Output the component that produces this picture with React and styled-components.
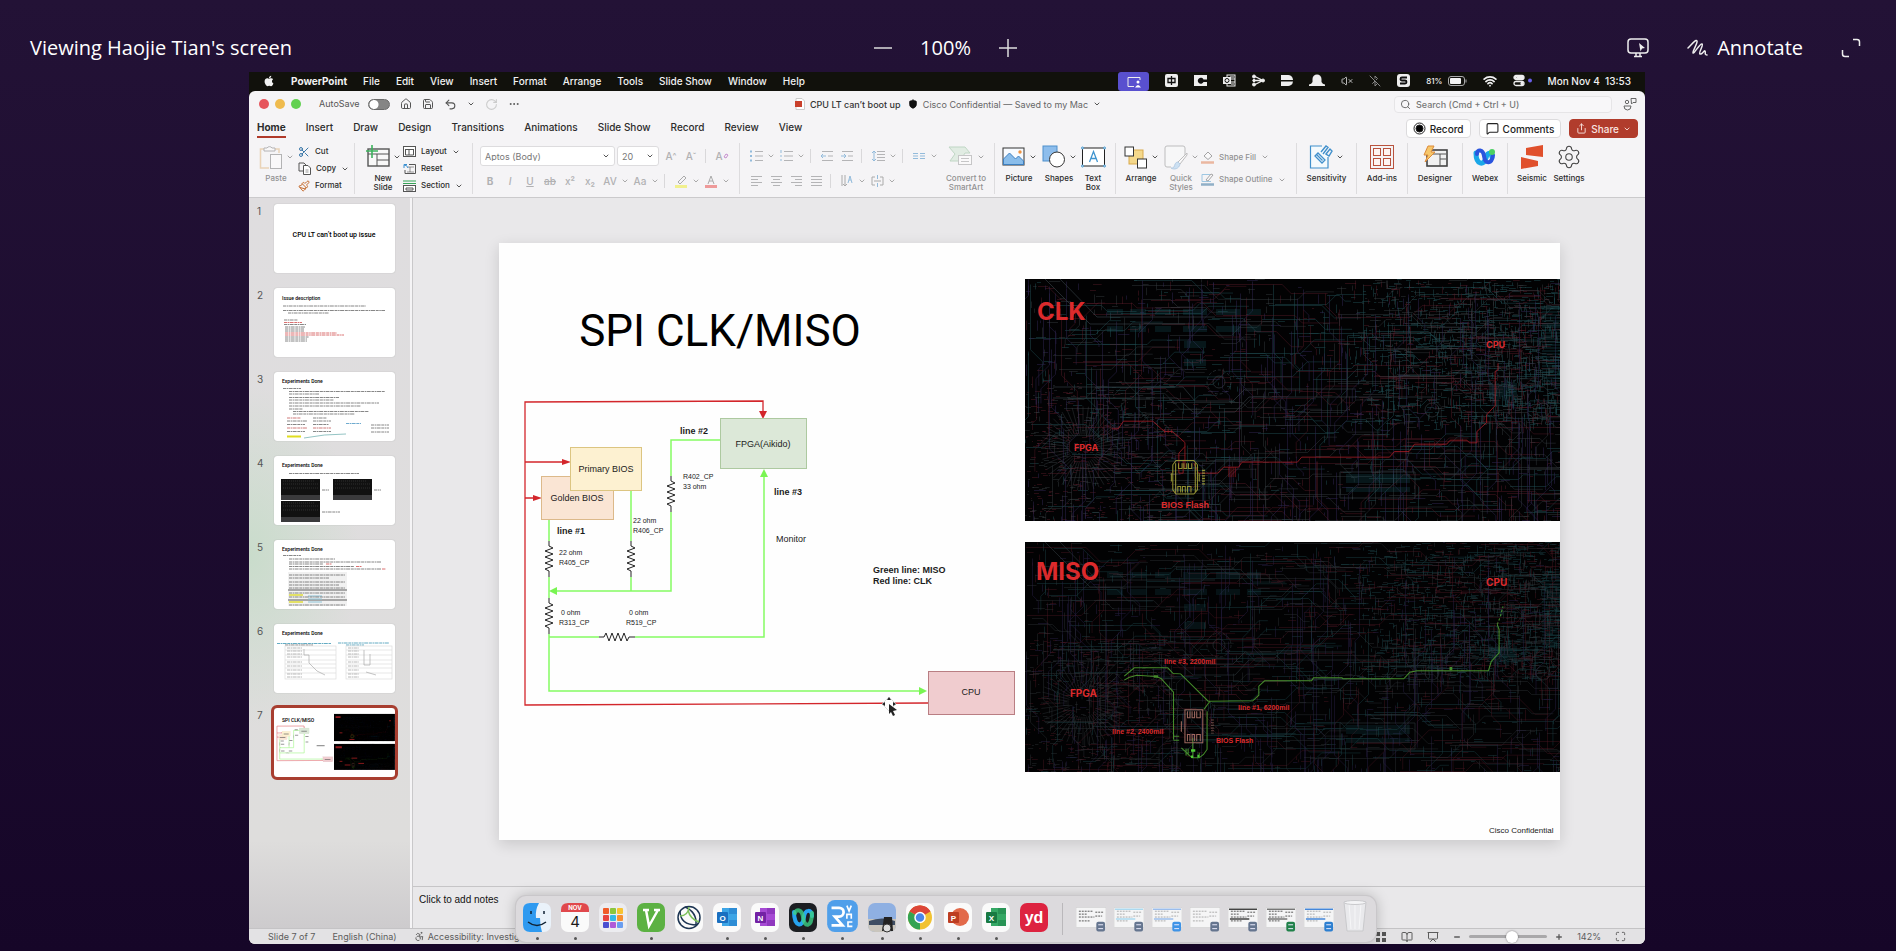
import React from "react";
import styled, { createGlobalStyle } from "styled-components";
import { Home, Save, Undo2, RotateCw, Ellipsis, Search, ChevronDown, Settings, MessageSquare, Share, Wifi, VolumeX, BluetoothOff, Plus, Minus, Scissors, Copy, Paintbrush, Accessibility, BookOpen, Presentation, Maximize, Shield } from "lucide-react";
import { FaApple } from "react-icons/fa";

const Global = createGlobalStyle`
  *, *::before, *::after { box-sizing: border-box; }
  body { margin: 0; background: #160628; }
  button, input, select { font: inherit; color: inherit; }
  button { background: none; border: 0; padding: 0; margin: 0; }
`;

/* ---------- meeting viewer ---------- */

const Viewer = styled.div`
  min-height: 100vh;
  display: flex;
  flex-direction: column;
  background: linear-gradient(#231236, #160628);
  color: #fff;
  font-family: "Open Sans", "Noto Sans", sans-serif;
`;

const ViewerBar = styled.header`
  height: 72px;
  padding: 23px 35px 0 30px;
  display: grid;
  grid-template-columns: 1fr auto 1fr;
  align-items: center;
  font-size: 20px;
  line-height: 26px;
  white-space: nowrap;
`;

const ZoomControls = styled.div`
  display: flex;
  align-items: center;
  gap: 28px;
`;

const ViewerTools = styled.div`
  display: flex;
  align-items: center;
  justify-content: flex-end;
  gap: 38px;
`;

const ViewerButton = styled.button`
  display: flex;
  align-items: center;
  gap: 9px;
  font-size: 20px;
  svg { display: block; }
`;

const Stage = styled.main`
  flex: 1;
  display: flex;
  flex-direction: column;
  margin: 0 251px 7px 249px;
  position: relative;
  background: #11110c;
  border-radius: 0 0 6px 6px;
  font-family: Inter, "Noto Sans", sans-serif;
  font-size: 9px;
  color: #2c2c2c;
  white-space: nowrap;
`;

/* ---------- mac menu bar ---------- */

const MacBar = styled.nav`
  height: 19px;
  padding: 0 14px 0 14px;
  display: flex;
  align-items: flex-start;
  justify-content: space-between;
  color: #f2f2f2;
  font-size: 10px;
  font-weight: 500;
`;

const MacMenus = styled.div`
  height: 17px;
  display: flex;
  align-items: center;
  gap: 16px;
  b { font-weight: 700; }
`;

const MacStatus = styled.div`
  height: 17px;
  display: flex;
  align-items: center;
  gap: 16px;
  svg { display: block; }
`;

const SharingBadge = styled.span`
  width: 31px;
  height: 19px;
  align-self: flex-start;
  border-radius: 3px;
  background: #5950cf;
  display: grid;
  place-items: center;
`;

const Battery = styled.span`
  display: flex;
  align-items: center;
  gap: 5px;
  font-size: 8px;
`;

/* ---------- PowerPoint window ---------- */

const Window = styled.section`
  flex: 1;
  min-height: 0;
  display: flex;
  flex-direction: column;
  background: #f5f4f6;
  border-radius: 6px;
  overflow: hidden;
`;

const TitleBar = styled.div`
  height: 26px;
  padding: 0 8px 0 10px;
  display: grid;
  grid-template-columns: 1fr auto 1fr;
  align-items: center;
`;

const QuickAccess = styled.div`
  display: flex;
  align-items: center;
  gap: 10px;
  font-size: 9px;
  color: #555;
  svg { display: block; }
`;

const Light = styled.button`
  width: 10px;
  height: 10px;
  border-radius: 50%;
  background: ${(p) => p.$color};
  margin-right: ${(p) => (p.$last ? 8 : -4)}px;
`;

const Switch = styled.input`
  appearance: none;
  margin: 0 0 0 8px;
  width: 22px;
  height: 11px;
  border-radius: 6px;
  border: 1px solid #6b6b6b;
  vertical-align: middle;
  background: radial-gradient(circle at 5px 50%, #fff 4px, #858585 5px);
`;

const DocTitle = styled.h1`
  margin: 0;
  display: flex;
  align-items: center;
  gap: 5px;
  font-size: 9px;
  font-weight: 500;
  color: #333;
  span { color: #666; font-weight: 400; }
  svg { display: block; }
`;

const TitleRight = styled.div`
  display: flex;
  align-items: center;
  justify-content: flex-end;
  gap: 11px;
  color: #666;
`;

const SearchBox = styled.label`
  width: 218px;
  height: 17px;
  padding: 0 5px;
  display: flex;
  align-items: center;
  gap: 5px;
  border: 1px solid #e6e5e7;
  border-radius: 4px;
  background: #f8f7f9;
  input {
    flex: 1;
    min-width: 0;
    border: 0;
    padding: 0;
    background: none;
    font-size: 9px;
    font-weight: 500;
    outline: 0;
  }
  input::placeholder { color: #777; opacity: 1; }
`;

const TabRow = styled.div`
  height: 22px;
  padding: 0 7px 0 8px;
  display: flex;
  justify-content: space-between;
  font-size: 10px;
`;

const Tabs = styled.div`
  display: flex;
  gap: 20px;
`;

const Tab = styled.button`
  height: 21px;
  padding-top: 2px;
  line-height: 17px;
  font-weight: ${(p) => (p.$active ? 700 : 500)};
  border-bottom: 2px solid ${(p) => (p.$active ? "#b03a2a" : "transparent")};
`;

const TabActions = styled.div`
  display: flex;
  gap: 8px;
  padding-top: 2px;
`;

const Pill = styled.button`
  height: 19px;
  padding: 0 6px;
  display: flex;
  align-items: center;
  gap: 4px;
  border-radius: 4px;
  border: 1px solid ${(p) => (p.$primary ? "#b13c2c" : "#dcdbdd")};
  background: ${(p) => (p.$primary ? "#b13c2c" : "#fff")};
  color: ${(p) => (p.$primary ? "#f8e4e0" : "#222")};
  font-weight: 500;
`;

const Ribbon = styled.div`
  height: 59px;
  padding-bottom: 3px;
  display: flex;
  border-bottom: 1px solid #cbcacc;
  font-size: 8px;
  font-weight: 500;
  line-height: 9px;
`;

const Group = styled.div`
  flex: 0 0 ${(p) => p.$w}px;
  margin-top: 4px;
  padding-left: ${(p) => p.$pad || 0}px;
  display: flex;
  gap: ${(p) => p.$gap || 0}px;
  justify-content: ${(p) => (p.$center ? "center" : "flex-start")};
  border-right: ${(p) => (p.$last ? 0 : 1)}px solid #dddcde;
`;

const BigButton = styled.button`
  width: ${(p) => p.$w}px;
  display: flex;
  flex-direction: column;
  align-items: center;
  opacity: ${(p) => (p.$dim ? 0.5 : 1)};
`;

const BigIcon = styled.span`
  height: 28px;
  margin-bottom: 3px;
  display: flex;
  align-items: center;
  gap: 3px;
  svg { display: block; }
`;

const Stack = styled.span`
  display: flex;
  flex-direction: column;
  justify-content: ${(p) => (p.$spread ? "space-evenly" : "space-between")};
  opacity: ${(p) => (p.$dim ? 0.5 : 1)};
`;

const RowButton = styled.button`
  height: 17px;
  display: flex;
  align-items: center;
  gap: 5px;
  svg { display: block; }
`;

const Tools = styled.div`
  display: flex;
  flex-direction: column;
  flex: 0 0 ${(p) => p.$w}px;
  gap: 5px;
  padding-top: 3px;
`;

const ToolRow = styled.div`
  height: 20px;
  display: flex;
  align-items: center;
  color: #b1b1b3;
  font-size: 10px;
`;

const Tool = styled.button`
  width: ${(p) => p.$w || 20}px;
  display: flex;
  justify-content: center;
  align-items: center;
  line-height: 12px;
  svg { display: block; }
`;

const Rule = styled.span`
  width: 1px;
  height: 14px;
  margin: 0 6px 0 4px;
  background: #d9d8da;
`;

const Field = styled.label`
  width: ${(p) => p.$w}px;
  height: 20px;
  margin-right: 2px;
  padding: 0 4px;
  display: flex;
  align-items: center;
  background: #fff;
  border: 1px solid #dddcde;
  border-radius: 3px;
  color: #555;
  select {
    flex: 1;
    min-width: 0;
    appearance: none;
    border: 0;
    padding: 0;
    background: none;
    font-size: 9px;
    font-weight: 400;
    color: #777;
  }
`;

const Body = styled.div`
  flex: 1;
  min-height: 0;
  display: flex;
`;

const Sidebar = styled.aside`
  flex: none;
  width: 161px;
  padding: 6px 15px 0 8px;
  display: flex;
  flex-direction: column;
  gap: 15px;
  background:
    radial-gradient(ellipse 110px 170px at 0 49%, #c9dccb, rgba(222, 222, 221, 0)),
    linear-gradient(#dfdddf, #dedddc 88%, #cdcbcd);
`;

const ThumbRow = styled.button`
  display: flex;
  align-items: flex-start;
  justify-content: space-between;
  text-align: left;
  font-size: 10px;
  line-height: 14px;
  color: #555;
`;

const Thumb = styled.span`
  width: 121px;
  height: 69px;
  border-radius: 3px;
  background: #fff;
  overflow: hidden;
  box-shadow: 0 0 1px #999;
  outline: ${(p) => (p.$active ? "3px solid #a83e30" : "0")};
  svg { display: block; }
`;

const Main = styled.div`
  flex: 1;
  min-width: 0;
  margin-left: 2px;
  border-left: 1px solid #c9c8ca;
  display: flex;
  flex-direction: column;
  background: #e9e8ea;
`;

const Canvas = styled.div`
  flex: 1;
  display: grid;
  align-items: center;
  padding: 0 85px 1px 86px;
`;

const Slide = styled.article`
  background: #fefefe;
  box-shadow: 0 4px 14px rgba(0, 0, 0, 0.14);
  > svg { display: block; width: 100%; height: auto; }
`;

const Notes = styled.div`
  height: 42px;
  padding: 6px 6px;
  border-top: 1px solid #c6c5c7;
  font-family: "Liberation Sans", Arial, sans-serif;
  font-size: 10px;
  line-height: 14px;
  color: #111;
`;

const StatusBar = styled.footer`
  height: 16px;
  padding: 0 19px;
  display: flex;
  align-items: center;
  justify-content: space-between;
  border-top: 1px solid #c4c3c5;
  background: #e3e2e4;
  color: #5c5c5c;
`;

const StatusGroup = styled.div`
  display: flex;
  align-items: center;
  gap: ${(p) => p.$gap}px;
  svg { display: block; }
`;

const Check = styled.span`
  display: flex;
  align-items: center;
  gap: 3px;
`;

const ZoomSlider = styled.input`
  appearance: none;
  width: 78px;
  height: 3px;
  margin: 0 -6px;
  border-radius: 2px;
  background: #a9a8aa;
  &::-webkit-slider-thumb {
    appearance: none;
    width: 12px;
    height: 12px;
    border-radius: 50%;
    background: #fff;
    box-shadow: 0 0 2px rgba(0, 0, 0, 0.5);
  }
`;

const Dock = styled.nav`
  position: absolute;
  left: 267px;
  bottom: 2px;
  height: 46px;
  padding: 0 8px 0 6px;
  display: flex;
  align-items: center;
  gap: 8px;
  border-radius: 10px;
  background: #dcdadd;
  box-shadow: 0 0 0 1px #c9c7ca, 0 0 14px rgba(0, 0, 0, 0.25);
`;

const DockApp = styled.button`
  height: 41px;
  display: flex;
  flex-direction: column;
  align-items: center;
  justify-content: flex-end;
  gap: 4px;
  &::after {
    content: "";
    width: 3px;
    height: 3px;
    border-radius: 50%;
    background: ${(p) => (p.$running ? "#555" : "transparent")};
  }
  svg { display: block; }
`;

const DockRule = styled.span`
  width: 1px;
  height: 32px;
  margin: 0 5px;
  background: #bab8bb;
`;

/* ---------- small drawings ---------- */

const Caret = ({ c = "#555", s = 8 }) => <ChevronDown size={s} color={c} strokeWidth={3} />;

const I = ({ w = 14, h = 12, children, ...p }) => (
  <svg width={w} height={h} viewBox={`0 0 ${w} ${h}`} fill="none" stroke="#555" {...p}>{children}</svg>
);

const statusIcons = {
  input: <I w={13} h={13} stroke="none"><rect width="13" height="13" rx="2" fill="#eee" /><path d="M3 4.500h7v4h-7z M6.500 2v9" fill="none" stroke="#111" strokeWidth="1.300" /></I>,
  c: <I w={13} h={13} stroke="none"><rect y="1" width="13" height="11" fill="#eee" /><path d="M13 5.500H9.500A3 3 0 1 0 9.500 8H13Z" fill="#111" /></I>,
  outlook: <I w={13} h={13} stroke="#eee"><rect x="4" y="1" width="8" height="11" /><path d="M7 3h4M8 5h4M8 8h4M8 10h3" /><rect y="3" width="8" height="7" fill="#eee" stroke="none" /><circle cx="4" cy="6.500" r="2" stroke="#111" /></I>,
  share: <I w={13} h={13} stroke="#eee" fill="#eee"><path d="M2 2 11 6.500 2 11M2 6.500h9" fill="none" strokeWidth="1.300" /><circle cx="2" cy="2.500" r="1.500" /><circle cx="2" cy="6.500" r="1.200" /><circle cx="2" cy="10.500" r="1.500" /><circle cx="11" cy="6.500" r="1.500" /></I>,
  d: <I w={12} h={13} stroke="none"><path d="M0 1h6a5 5 0 0 1 6 5H0ZM0 7.500h12a5 5 0 0 1-6 4.500H0Z" fill="#eee" /></I>,
  bell: <I w={16} h={13} stroke="none"><path d="M3.500 8V5a4.500 4.500 0 0 1 9 0v3q1 2 3.500 2.500v1.500H0v-1.500Q2.500 10 3.500 8Z" fill="#eee" /></I>,
  s: <I w={13} h={13} stroke="none"><rect width="13" height="13" rx="3" fill="#eee" /><path d="M10 3.500H5a1.500 1.500 0 0 0 0 3h3a1.500 1.500 0 0 1 0 3H3" fill="none" stroke="#111" strokeWidth="1.800" /></I>,
  toggles: <I w={19} h={13} stroke="#eee" strokeWidth="1.300"><rect x="1" y="1.500" width="10" height="4" rx="2" fill="#eee" /><circle cx="3.500" cy="3.500" r="1" fill="#111" /><rect x="1" y="7.500" width="10" height="4" rx="2" /><circle cx="9" cy="9.500" r="1" fill="#eee" /><circle cx="17" cy="6.500" r="2" fill="#6a60ea" stroke="none" /></I>,
};

const pic = {
  paste: <I w={24} h={25} opacity=".8"><path d="M5 4H1.500v19H10M16 4h4v4" stroke="#dba45c" strokeWidth="1.500" /><path d="M5 5V3h3a3 3 0 0 1 5 0h3v3H5Z" fill="#fff" /><rect x="11.500" y="9.500" width="11" height="14" fill="#fff" /></I>,
  newSlide: <I w={24} h={25}><rect x="2" y="4" width="21" height="17" fill="#f8f8f8" strokeWidth="1.400" /><path d="M2 9h21M11 9v12M11 15h12" /><path d="M6 0v13M0 6h12" stroke="#3bb25c" strokeWidth="1.600" /></I>,
  copy: <I w={13} h={13}><path d="M5 9H1V1h5l2 2v1" /><path d="M5.500 3.500H10l2.500 2.500v6.500h-7Z" fill="#fff" /><path d="M7.500 8h3M7.500 10h3" opacity=".6" /></I>,
  layout: <I w={13} h={11}><rect x=".5" y=".5" width="12" height="10" fill="#fff" /><path d="M2 3.500h9M2.500 3v6h8V3M6 3v6" /></I>,
  reset: <I w={13} h={11}><path d="M6 1.500h6.500v9H2V7" /><path d="M5 4h6M7 4v5M4 9h7" opacity=".6" /><path d="M5 5a4 4 0 0 0-4-3M1 5V1.500h3" stroke="#3a8fd0" /></I>,
  section: <I w={13} h={12}><path d="M0 1h13M0 3.500h13" stroke="#35a457" /><rect x=".5" y="5.500" width="12" height="6" fill="#fff" /><path d="M3 8h7v2H3z" /></I>,
  smart: <I w={26} h={22} stroke="#8cba95"><path d="M1 1h16l5 6h-5l-5 8H2l5-7Z" fill="#cfe6d2" /><rect x="10.500" y="9.500" width="13" height="9" fill="#fff" stroke="#999" /><path d="M13 12.500h8M13 15.500h8" stroke="#999" /></I>,
  picture: <I w={24} h={20}><rect x="1" y="1" width="21" height="17" fill="#f8fbff" stroke="#333" /><path d="M1.500 17V12l6-6 6 6 3-3 5 5v3.500h-20Z" fill="#8abdea" stroke="#3c7fc0" /><circle cx="18" cy="5" r="1.700" fill="#ef9340" stroke="none" /></I>,
  shapes: <I w={24} h={24}><rect x="1" y="1" width="14" height="15" fill="#8dbdec" stroke="#4f8fcb" /><circle cx="15" cy="14.500" r="7.500" fill="#fff" stroke="#333" /></I>,
  textBox: <I w={25} h={22}><rect x="1.500" y="2" width="22" height="18" fill="#fff" stroke="#222" /><path d="M8.500 16 12.500 5.500 16.500 16M9.700 12.500h5.600" stroke="#3f94cf" strokeWidth="1.300" /><g fill="#fff" stroke="#3f94cf"><circle cx="1.500" cy="2" r="1" /><circle cx="23.500" cy="2" r="1" /><circle cx="1.500" cy="20" r="1" /><circle cx="23.500" cy="20" r="1" /></g></I>,
  arrange: <I w={24} h={23}><rect x="5" y="4" width="14" height="14" fill="#f4d88b" stroke="#d9a94c" /><rect x="1" y="1" width="8.500" height="9" fill="#fff" stroke="#333" /><rect x="13.500" y="13" width="9" height="9" fill="#fff" stroke="#333" /></I>,
  quick: <I w={24} h={25} stroke="#888"><path d="M21 12V3a2 2 0 0 0-2-2H3a2 2 0 0 0-2 2v17a2 2 0 0 0 2 2h4" fill="#fafafa" /><path d="M23 8 14 17l2 2 7-9Z" fill="#fff" /><path d="M14 17c-3 0-3 3-4 5-1 1-2 1-3 1 3 2 8 1 9-4Z" fill="#a4cdf0" stroke="#78a7d2" /></I>,
  fill: <I w={13} h={13}><path d="m3 5 4-4 4 4-4 3.500Z" fill="#fff" /><path d="M0 11.500h13" stroke="#e07b4c" strokeWidth="2.500" /></I>,
  outline: <I w={13} h={13}><path d="M9 1.500H1v7h9" stroke="#4a9bd0" /><path d="m5 7 5-6 2 1-5 6Z" fill="#fff" /><path d="M0 11.500h13" stroke="#2d6c99" strokeWidth="2.500" /></I>,
  sensitivity: <I w={24} h={26} stroke="#4190cc"><path d="M13 2H1.500v22H19V13" fill="#f4fafd" strokeWidth="1.200" /><path d="m6 12 3-3 7 7-3 3Zm2-1 5.500 5.500" strokeWidth="1.300" /><path d="m12 8 5-6 2 1.500-5 6.500M17 10l4-5 2 2-3 5-3-2Z" strokeWidth="1.400" /></I>,
  addins: <I w={24} h={24} stroke="#b9533e"><rect x=".5" y=".5" width="23" height="23" /><g fill="#fff5f2"><rect x="3.500" y="3.500" width="7" height="7" /><rect x="13.500" y="3.500" width="7" height="7" /><rect x="3.500" y="13.500" width="7" height="7" /><rect x="13.500" y="13.500" width="7" height="7" /></g></I>,
  designer: <I w={25} h={24}><rect x="4" y="5" width="20" height="16" fill="#f1f1f1" stroke="#444" strokeWidth="1.600" /><path d="M5 9h18M17 9v12M17 14h6" /><path d="M5 1h6L8 7h4L2 17l3-7H1Z" fill="#f6c76b" stroke="#dd8b3a" /></I>,
  webex: <I w={24} h={20} stroke="none"><path d="M3 6c0 12 8 13 10 5 2-8 6-4 6-1" fill="none" stroke="#1aa7e8" strokeWidth="5" strokeLinecap="round" /><path d="M20 8c-1 9-8 10-9 1C10 2 4 2 4 7" fill="none" stroke="#2a54de" strokeWidth="4" strokeLinecap="round" /><circle cx="19" cy="5" r="3" fill="#4cd062" /></I>,
  seismic: <I w={24} h={26} stroke="none" fill="#e0502c"><path d="M6 4 23 1v12L6 11ZM1 13l17 4v5L1 25Z" /></I>,
};

const Lines = ({ rows, lead, children }) => (
  <svg width="13" height="12" viewBox="0 0 13 12" fill="none" stroke="#b4b4b6">
    {rows.map(([a, b], i) => <path key={i} d={`M${a} ${1.5 + i * (9 / (rows.length - 1))}H${b}`} />)}
    {lead && <path d="M0 1.500h2M0 6h2M0 10.500h2" stroke="#93bbdb" strokeWidth="2" />}
    {children}
  </svg>
);

/* ---------- circuit board artwork ---------- */

function boardPaths(seed, w, h) {
  let s = seed;
  const r = () => ((s = (s * 16807) % 2147483647) / 2147483647);
  const out = { teal: "", wine: "", violet: "", grey: "", pads: "" };
  const keys = ["teal", "wine", "violet", "grey"];
  for (let i = 0; i < 560; i++) {
    const k = keys[Math.floor(r() * 4)];
    const x = Math.round(r() * w), y = Math.round(r() * h) + 0.5;
    const len = 8 + r() * 75, d = 4 + r() * 12;
    const up = r() > 0.5 ? 1 : -1;
    out[k] += k === "violet" || r() > 0.72
      ? `M${x + 0.5} ${y}v${len}l${d * up} ${d}v${len / 3}`
      : `M${x} ${y}h${len}l${d} ${d * up}h${len / 2}`;
  }
  for (let i = 0; i < 1500; i++) {
    const x = Math.round(w * (0.6 + 0.4 * Math.pow(r(), 0.7))), y = Math.round(r() * h * 0.6) + 0.5;
    const k = r() > 0.4 ? "teal" : r() > 0.5 ? "wine" : "grey";
    out[k] += r() > 0.4 ? `M${x} ${y}h${2 + r() * 7}` : `M${x + 0.5} ${y}v${2 + r() * 7}`;
  }
  for (let i = 0; i < 1100; i++) {
    const x = Math.round(r() * w), y = Math.round(r() * h) + 0.5;
    const k = keys[Math.floor(r() * 4)];
    out[k] += r() > 0.5 ? `M${x} ${y}h${2 + r() * 10}` : `M${x + 0.5} ${y}v${2 + r() * 10}`;
  }
  for (let i = 0; i < 600; i++) {
    const x = Math.round(r() * w * 0.28), y = Math.round(h * (0.42 + r() * 0.58)) + 0.5;
    out[r() > 0.6 ? "grey" : "wine"] += `M${x} ${y}h${1 + r() * 5}`;
  }
  for (let a = 0; a < 48; a++) {
    const t = (a / 48) * Math.PI * 2;
    out.grey += `M${58 + Math.cos(t) * 14} ${h * 0.7 + Math.sin(t) * 14}L${58 + Math.cos(t) * 42} ${h * 0.7 + Math.sin(t) * 42}`;
  }
  [[83, 15], [106, 15], [131, 15], [159, 23], [192, 23], [223, 14]].forEach(([x, n]) => {
    [30, 47].forEach((y) => { for (let j = 0; j < n; j += 2) out.pads += `M${x + j} ${y}v6`; });
  });
  [62, 80].forEach((y) => { for (let j = 0; j < 22; j += 2) out.pads += `M${160 + j} ${y}v7`; });
  for (let j = 0; j < 64; j += 2) out.pads += `M${322 + j} ${h - 47}v9m0 4v5`;
  for (let j = 0; j < 28; j += 2) out.pads += `M${465 + j} ${102 + (j % 6)}v${14 + (j % 10)}`;
  for (let j = 30; j < 108; j += 3) out.pads += `M${w - 18} ${j}h18`;
  return out;
}

const clkBoard = boardPaths(4211, 535, 242);
const misoBoard = boardPaths(9127, 535, 230);

const Board = ({ art, h, dim }) => (
  <>
    <rect width="535" height={h} fill="#020203" />
    <g fill="none" strokeWidth="1" opacity={dim}>
      <path d={art.teal} stroke="#1d4a4f" opacity=".5" />
      <path d={art.wine} stroke="#5c1c2a" opacity=".42" />
      <path d={art.violet} stroke="#2d2350" opacity=".5" />
      <path d={art.grey} stroke="#3a4044" opacity=".42" />
      <path d={art.pads} stroke="#1c626c" opacity=".45" />
      <g stroke="#39444a" opacity=".6">
        <path d="M20 0 65 45H160M35 0 72 38H190M28 119H152L168 133H210L224 118H410M28 108h130l12 14h38l12-12h110" />
        <path d={`M315 ${h - 49}h75v26h-75z`} />
        <circle cx="194" cy="103" r="12" strokeDasharray="3 2" /><circle cx="194" cy="103" r="6" />
        <circle cx="407" cy="131" r="7" /><circle cx="518" cy="131" r="7" />
      </g>
    </g>
  </>
);

const ClkTrace = () => (
  <g transform="scale(.357 .333) translate(-27 -57)" fill="none" opacity=".85">
    <path stroke="#b32029" strokeWidth="2.500" d="M270 507H288L303 484H385L410 508 418 515H440L475 548V625M475 560 458 580V640H470V600" />
    <path stroke="#b32029" strokeWidth="2.500" d="M500 610 513 640H567L583 622H625L635 607H790L802 592H1048L1062 575H1103L1118 553H1208L1218 541H1265L1272 549H1293V515L1320 488V465L1344 437V335L1352 330V310" />
    <path stroke="#b32029" strokeWidth="2" d="M598 622v30M604 622v30M610 622v30M616 622v30M418 508v12M428 508v12M438 508v12" />
    <g stroke="#aaa83a" strokeWidth="3">
      <path d="M450 602H500L510 615V690L500 703H450L441 690V615ZM449 610V698M504 610V698M437 640v25M515 640v25" />
      <path d="M457 610v16h10v-16M472 610v16h8v-16M485 610v16h9v-16M455 698v-18h8v18M468 698v-18h8v18M482 698v-18h10v18" />
      <path d="M527 630v45" strokeWidth="8" strokeDasharray="4 4" />
    </g>
  </g>
);

const MisoTrace = () => (
  <g transform="scale(.357 .333) translate(-27 -37)" fill="none" strokeWidth="3" stroke="#4c9a2f" opacity=".9">
    <path d="M305 440 333 415H427L442 432 463 433 540 515 665 514 682 497V470L698 454H830L835 445H915L918 448H1088L1105 428 1125 424H1325L1333 396 1355 370V300L1350 285" />
    <path d="M1350 285 1358 262 1366 230" strokeDasharray="7 6" />
    <path d="M305 452 318 444 340 437 395 441 408 447 443 488V630M443 620h16M443 632h16" />
    <path d="M545 515 528 540M537 545V660L527 675 515 685H495L465 655M478 658v20M484 658v20M497 625v60M515 670v14" />
    <path d="M388 441h12M1220 412v10" strokeWidth="8" />
    <path stroke="#57e03c" strokeWidth="8" d="M492 663h12M492 682h6M510 680h5" />
    <g stroke="#ad7368">
      <path d="M475 541H525V640H475ZM465 575v32M482 545v20h7v-20M495 545v20h7v-20M508 545v20h10v-20M482 635v-20h7v20M495 635v-20h7v20M508 635v-20h10v20" />
      <path d="M552 570v42" strokeWidth="8" strokeDasharray="3 5" opacity=".7" />
    </g>
  </g>
);

const Zig = ({ x, y, turn }) => (
  <path
    transform={`translate(${x} ${y}) rotate(${turn ? -90 : 0})`}
    d="M0 0V5L4 7-4 10 4 13-4 16 4 19-4 22 4 25-4 28 0 30V36"
    fill="none" stroke="#222" strokeWidth="1"
  />
);

const Wires = () => (
  <>
    <g fill="none" stroke="#d3262b" strokeWidth="1.300">
      <path d="M429 460 26 462V159L264 158V170M26 219H66M26 255H37" />
    </g>
    <path fill="#d3262b" d="m264 176-4-8h8ZM72 219l-9-3v6ZM43 255l-9-3v6Z" />
    <rect x="42.500" y="233.500" width="72" height="43" fill="#fae5d4" stroke="#dcb98a" />
    <rect x="71.500" y="204.500" width="71" height="43" fill="#fdf1d1" stroke="#dcc581" />
    <rect x="221.500" y="175.500" width="86" height="50" fill="#dce8d8" stroke="#adc9a0" />
    <rect x="429.500" y="428.500" width="86" height="43" fill="#f0cccf" stroke="#b97e83" />
    <g fill="none" stroke="#85fb63" strokeWidth="1.500">
      <path d="M50 277V298M50 334V355M50 391V448H422M50 394H100M136 394H265V233M221 197H172V233M172 269V348H57M132 248V298M132 334V348" />
    </g>
    <path fill="#79f552" d="m428 448-8-4v8ZM265 226l-4 8h8ZM50 348l8-4v8Z" />
    <Zig x={50} y={298} /><Zig x={50} y={355} /><Zig x={132} y={298} /><Zig x={172} y={233} /><Zig x={100} y={394} turn />
  </>
);

const Label = styled.text`
  font-family: ${(p) => (p.$inter ? 'Inter, "Noto Sans"' : '"Liberation Sans", Arial')}, sans-serif;
  font-size: ${(p) => p.$s || 9}px;
  font-weight: ${(p) => (p.$b ? 700 : 400)};
  fill: ${(p) => p.$c || "#1b1b1b"};
  text-anchor: ${(p) => (p.$mid ? "middle" : "start")};
`;

const Headline = styled.text`
  font-family: Roboto, "Noto Sans", sans-serif;
  font-size: ${(p) => p.$s}px;
  font-weight: ${(p) => p.$w || 400};
  text-anchor: ${(p) => (p.$mid ? "middle" : "start")};
`;

const wireLabels = [
  ["Primary BIOS", 107, 229, 9, 0, 1], ["Golden BIOS", 78, 258, 9, 0, 1], ["FPGA(Aikido)", 264, 204, 9, 0, 1], ["CPU", 472, 452, 9, 0, 1],
  ["line #2", 181, 191, 9, 1], ["line #3", 275, 252, 9, 1], ["line #1", 58, 291, 9, 1], ["Monitor", 277, 299, 9],
  ["Green line: MISO", 374, 330, 9, 1], ["Red line: CLK", 374, 341, 9, 1],
  ["R402_CP", 184, 236, 7], ["33 ohm", 184, 246, 7], ["22 ohm", 134, 280, 7], ["R406_CP", 134, 290, 7], ["22 ohm", 60, 312, 7], ["R405_CP", 60, 322, 7],
  ["0 ohm", 62, 372, 7], ["R313_CP", 60, 382, 7], ["0 ohm", 130, 372, 7], ["R519_CP", 127, 382, 7],
];

const RED = "#dc2a2c";
const clkLabels = [["CLK", 12, 41, 24, 1], ["CPU", 461, 69, 9, 1], ["FPGA", 49, 172, 9, 1], ["BIOS Flash", 136, 229, 9, 0]];
const misoLabels = [["MISO", 11, 38, 24, 1], ["CPU", 461, 44, 10, 1], ["FPGA", 45, 155, 10, 1], ["line #3, 2200mil", 139, 122, 7, 0], ["line #1, 6200mil", 213, 168, 7, 0], ["line #2, 2400mil", 87, 192, 7, 0], ["BIOS Flash", 191, 201, 7, 0]];

const Labels = ({ list }) => list.map(([t, x, y, s, inter]) => (
  <Label key={t} x={x} y={y} $s={s} $b $c={RED} $inter={inter}>{t}</Label>
));

const SlideArt = () => (
  <svg viewBox="0 0 1061 597" role="img" aria-label="SPI CLK and MISO routing">
    <Headline x="221" y="103" $s={44} $mid>SPI CLK/MISO</Headline>
    <Wires />
    {wireLabels.map(([t, x, y, s, b, mid], i) => <Label key={i} x={x} y={y} $s={s} $b={b} $mid={mid}>{t}</Label>)}
    <svg x="526" y="36" width="535" height="242"><Board art={clkBoard} h={242} dim={1} /><ClkTrace /><Labels list={clkLabels} /></svg>
    <svg x="526" y="299" width="535" height="230"><Board art={misoBoard} h={230} dim={0.8} /><MisoTrace /><Labels list={misoLabels} /></svg>
    <Label x="990" y="590" $s={8}>Cisco Confidential</Label>
    <g transform="translate(390 461)">
      <path d="M0-7 7 0 0 7-7 0Z" fill="#fff" stroke="#ddd" />
      <path d="m0-7-2 3h4ZM-7 0l3-2v4ZM7 0 4-2v4ZM0 0l8 6-4 1 2 4-2 1-2-4-2 2Z" fill="#222" />
    </g>
  </svg>
);

/* ---------- thumbnails ---------- */

const Scribble = ({ rows, c = "#555", o = 0.7 }) => rows.map(([x, y, w, col], i) => (
  <path key={i} d={`M${x} ${y}h${w}`} stroke={col || c} strokeWidth="1" strokeDasharray="3 .6 1.500 .5 4 .7" opacity={o} />
));

const Scope = ({ x, y, w, h }) => (
  <g><rect x={x} y={y} width={w} height={h} fill="#111" /><rect x={x} y={y + h - 5} width={w} height="5" fill="#3a3a3c" />
    <path d={`M${x + 2} ${y + 2}h${w - 8}M${x + 2} ${y + 5}h${w - 4}M${x + 2} ${y + 9}h${w - 4}`} stroke="#444" strokeWidth=".6" strokeDasharray="1 1" /></g>
);

const thumbs = [
  <Headline key="a" x="60" y="33" $s={7} $w={500} $mid>CPU LT can’t boot up issue</Headline>,
  <g key="b"><Headline x="8" y="12" $s={5} $w={500}>Issue description</Headline>
    <Scribble rows={[[9, 18, 83], [9, 22.5, 102], [14, 25, 41], [10, 32, 14], [10, 34.500, 18, "#c33"], [10, 36.500, 22], [11, 39, 20], [11, 41, 19], [11, 43, 19], [11, 45, 52, "#c33"], [11, 47, 59, "#c33"], [11, 49, 24], [11, 51, 22], [11, 53, 22]]} /></g>,
  <g key="c"><Headline x="8" y="11" $s={5} $w={500}>Experiments Done</Headline>
    <Scribble rows={[[9, 16.5, 18], [15, 19.500, 96], [15, 22, 30], [15, 25.5, 50], [15, 28, 45], [15, 31, 90], [15, 34, 72], [15, 37, 14], [19, 39.500, 76], [19, 42, 62], [13, 46, 14, "#b44"], [39, 46, 14], [13, 49, 20], [39, 49, 18], [13, 52.5, 18], [39, 52.5, 16], [13, 56, 20, "#b44"], [39, 56, 18, "#b44"], [13, 59.500, 18], [39, 59.500, 18], [72, 51.5, 15, "#38b"], [97, 53, 18], [97, 56, 18], [97, 60, 18]]} />
    <path d="M13 64.500h14" stroke="#e0dd20" strokeWidth="2" /><path d="M30 66q20-4 42-4" stroke="#6aa" fill="none" strokeWidth=".7" /></g>,
  <g key="d"><Headline x="8" y="11" $s={5} $w={500}>Experiments Done</Headline>
    <Scribble rows={[[15, 17.5, 70], [48, 34, 7], [100, 34, 7], [48, 56, 18]]} />
    <Scope x={7} y={23} w={39} h={21} /><Scope x={59} y={23} w={39} h={21} /><Scope x={7} y={45} w={39} h={21} /></g>,
  <g key="e"><Headline x="8" y="11" $s={5} $w={500}>Experiments Done</Headline>
    <Scribble rows={[[9, 15.5, 18], [15, 19, 46], [15, 22, 92], [15, 24, 34], [52, 24, 6, "#c33"], [15, 26.5, 65], [15, 29, 92], [108, 29, 4, "#c33"], [82, 26.500, 6, "#c33"]]} />
    <rect x="14" y="32" width="59" height="34" fill="#f1f1f1" />
    <path d="M14 50h59M14 60h59" stroke="#777" strokeWidth="2" opacity=".6" />
    <path d="M34 56h14M34 59h14M34 62h14" stroke="#8dc3d6" /><path d="M15 55h14M15 62h14" stroke="#dedb3a" strokeWidth="1.500" />
    <Scribble rows={[[15, 35, 56], [15, 38, 40], [15, 42, 56], [15, 45, 50], [15, 48, 56], [15, 53, 56], [15, 57, 56], [15, 65, 56]]} /></g>,
  <g key="f"><Headline x="8" y="11" $s={5} $w={500}>Experiments Done</Headline>
    <Scribble rows={[[3, 19.500, 54, "#28a"], [64, 19, 51, "#28a"], [72, 21, 18, "#28a"], [11, 21, 28]]} />
    <g fill="none" stroke="#ddd" strokeWidth=".7"><rect x="11" y="22" width="51" height="33" /><rect x="72" y="22" width="46" height="33" />
      <path d="M11 26h51M11 31h51M11 36h51M11 40h51M11 44h51M11 49h51M72 26h46M72 31h46M72 36h46M72 40h46M72 44h46M72 49h46" /><path d="M30 25v6h5v8l8 8 8 4M90 26v15h6V30m-4 18 10 3" stroke="#aaa" /></g>
    <Scribble o={0.4} rows={[24, 27, 30, 33, 38, 42, 46, 50, 53].flatMap((y) => [[13, y, 15], [74, y, 11]])} /></g>,
  <g key="g"><Headline x="8" y="14" $s={5} $w={500}>SPI CLK/MISO</Headline>
    <g transform="scale(.114)">
      <Wires />
      <g fill="none" strokeWidth="5" opacity=".5">
        <path stroke="#d3262b" d="M429 460 26 462V159L264 158V170M26 219H66M26 255H37" />
        <path stroke="#79f552" d="M50 277V448H422M50 394H265V233M221 197H172V348H57M132 248V348" />
      </g>
      <svg x="526" y="50" width="535" height="242"><Board art={clkBoard} h={242} dim={1} /><ClkTrace /></svg>
      <svg x="526" y="313" width="535" height="230"><Board art={misoBoard} h={230} dim={1} /><MisoTrace /></svg>
      <g stroke="#d3262b" strokeWidth="8" opacity=".7"><path d="M575 218h25M1010 112h16M662 276h44M575 468h25M680 440h50M740 486h50M620 500h50" /><path d="M540 80h44M540 345h55" strokeWidth="17" /></g>
      <g stroke="#555" strokeWidth="9" opacity=".6"><path d="M85 229h44M50 258h50M240 204h48M445 452h50M374 330h70M181 190h28M275 250h28M58 290h28M277 299h24M184 240h28M134 285h28M60 318h30M62 378h30M130 378h30" /></g>
    </g></g>,
];

/* ---------- dock ---------- */

const Tile = ({ bg = "#fafafa", children, w = 30, h = 31 }) => (
  <svg width={w} height={h} viewBox="0 0 30 31"><rect x="1" y="1" width="28" height="29" rx="7" fill={bg} />{children}</svg>
);

const OfficeTile = ({ a, b, t, round }) => (
  <Tile>
    {round ? <circle cx="17" cy="15" r="9" fill={b} /> : <path d="M10 6h15v18H10Z" fill={b} />}
    {!round && <path d="M17 6h8v6h-8zM17 18h8v6h-8z" fill={a} opacity=".45" />}
    <rect x="5" y="10" width="11" height="11" rx="1" fill={a} />
    <Label x="10.5" y="18.500" $s={8} $b $mid $c="#fff">{t}</Label>
  </Tile>
);

const apps = [
  ["Finder", 1, <Tile bg="#eaf2fa"><path d="M8 1h9q-4 7-3 15h4q0 8 2 14H8q-7 0-7-7V8q0-7 7-7Z" fill="#2f9af0" /><path d="M9 9v3M22 9v3M6 20q9 7 18 0" stroke="#123" strokeWidth="1.500" fill="none" /></Tile>],
  ["Calendar", 1, <Tile><path d="M1 10V8q0-7 7-7h14q7 0 7 7v2Z" fill="#e0484c" /><Label x="15" y="8" $s={6} $b $mid $c="#fff" $inter>NOV</Label><Label x="15" y="25" $s={15} $mid $inter>4</Label></Tile>],
  ["Launchpad", 0, <Tile bg="#ececf0">{["#f05a28", "#8cc63f", "#f7c331", "#e8433f", "#35b8e8", "#f78f31", "#4a4fd0", "#b05ad8", "#6a9df0"].map((c, i) => <rect key={c} x={5 + (i % 3) * 7} y={6 + Math.floor(i / 3) * 7} width="6" height="6" rx="1" fill={c} />)}</Tile>],
  ["Vim", 1, <Tile bg="#5cb143"><path d="M7 8h6M18 8h6M10 8l3 16L22 8" stroke="#fff" strokeWidth="2.500" fill="none" /></Tile>],
  ["Cisco Secure Client", 0, <Tile><g fill="none" strokeWidth="1.500"><circle cx="15" cy="15.500" r="11" stroke="#1c3452" /><path d="M6 9q0 14 17 14M11 5q12 5 11 18" stroke="#1c3452" /><path d="M6 14q8 0 9-9M14 8q2 9 11 12" stroke="#7cc05a" /></g></Tile>],
  ["Outlook", 1, <OfficeTile a="#1a6fc0" b="#3da5e6" t="O" />],
  ["OneNote", 1, <OfficeTile a="#7322a4" b="#a64ad4" t="N" />],
  ["Webex", 1, <Tile bg="#1c1e22"><path d="M6 10c0 15 9 16 10 5 1-8 8-8 8-1" fill="none" stroke="#27a4f0" strokeWidth="4" strokeLinecap="round" /><path d="M24 11c0 15-8 15-9 4C14 7 8 7 7 11" fill="none" stroke="#3ccf86" strokeWidth="4" strokeLinecap="round" opacity=".8" /></Tile>],
  ["RealVNC", 1, <Tile bg="#509fea" w={33} h={34}><path d="M5 8h7a4 4 0 0 1 0 8H8l7 8H5" fill="none" stroke="#fff" strokeWidth="2.500" /><path d="m19 6 2 5 2-5M19 18v-4h4v4M24 21h-4v4h4" fill="none" stroke="#fff" strokeWidth="1.500" /></Tile>],
  ["Preview", 1, <Tile bg="#8fb0e2"><path d="M1 17h28v6q0 7-7 7H8q-7 0-7-7Z" fill="#c9c5bd" /><path d="M2 19q13-5 26 0v4H2Z" fill="#3e4d63" /><path d="m17 15 8 0 1 14h-11Z" fill="#222" /><circle cx="20" cy="26" r="4" fill="#ddd" stroke="#333" /></Tile>],
  ["Chrome", 1, <Tile><circle cx="15" cy="15.500" r="12" fill="#f1c232" /><path d="M15 15.500 4.600 9.500A12 12 0 0 1 25.400 9.500Z" fill="#dc4638" /><path d="M4.600 9.500 15 15.500 15 27.500A12 12 0 0 1 4.600 9.500Z" fill="#35a352" /><path d="M4.600 9.500A12 12 0 0 1 25.400 9.500L15 10.500Z" fill="#dc4638" /><circle cx="15" cy="15.500" r="5" fill="#4a86e8" stroke="#fff" strokeWidth="1.500" /></Tile>],
  ["PowerPoint", 1, <OfficeTile a="#bd3d22" b="#e2694a" t="P" round />],
  ["Excel", 1, <OfficeTile a="#187a43" b="#35a865" t="X" />],
  ["Youdao", 0, <Tile bg="#dd2340"><Label x="15" y="21" $s={16} $b $mid $c="#fff">yd</Label></Tile>],
];

const MiniDoc = ({ c = "#6f8fc4", accent, dark }) => (
  <svg width="30" height="30" viewBox="0 0 31 30"><rect y="4" width="31" height="21" fill="#f5f5f6" stroke="#ccc" strokeWidth=".6" />
    <path d="M3 8h14M3 11h9M3 14h16M3 18h11M20 9h8M20 13h7" stroke={dark ? "#555" : "#aaa"} strokeDasharray="2 1" />
    {accent && <path d="M1 6h29M2 16h20" stroke={accent} strokeWidth="1.500" />}
    <rect x="21" y="19" width="9" height="10" rx="2" fill={c} /><path d="M23 22h5M23 26h5" stroke="#eef" /></svg>
);

const minis = [["#65758f", null, 1], ["#65758f", "#abd9ef"], ["#3f93e6", "#9bbdec"], ["#65758f"], ["#65758f", "#444", 1], ["#20814a", "#777", 1], ["#2d7fd0", "#4586d8"]];

/* ---------- page ---------- */

const Big = ({ icon, label, w, caret, dim }) => (
  <BigButton $w={w} $dim={dim}><BigIcon>{icon}{caret && <Caret />}</BigIcon>{label.map((l) => <span key={l}>{l}</span>)}</BigButton>
);

const DropTool = ({ children, w }) => <><Tool $w={w}>{children}</Tool><Tool $w={10} aria-label="More"><Caret c="#aaa" /></Tool></>;

export default function App() {
  return (
    <Viewer>
      <Global />
      <ViewerBar>
        <span>Viewing Haojie Tian's screen</span>
        <ZoomControls>
          <ViewerButton aria-label="Zoom out"><I w={18} h={18} stroke="#ddd" strokeWidth="1.500"><path d="M0 9h18" /></I></ViewerButton>
          <span>100%</span>
          <ViewerButton aria-label="Zoom in"><I w={18} h={18} stroke="#ddd" strokeWidth="1.500"><path d="M0 9h18M9 0v18" /></I></ViewerButton>
        </ZoomControls>
        <ViewerTools>
          <ViewerButton aria-label="Request control"><I w={22} h={20} stroke="#eee" strokeWidth="1.500"><rect x="1" y="1" width="20" height="14" rx="3" /><path d="M7 18.500h8M9 15v3M13 15v3" /><path d="m12 5 6 5-3 .500-1.500 3Z" fill="#eee" stroke="none" /></I></ViewerButton>
          <ViewerButton><I w={21} h={18} stroke="#eee" strokeWidth="1.500" strokeLinecap="round"><path d="M1 9C5 5 9 0 10 2S5 13 6 14 13 4 15 5s-4 9-2 10 4-4 5-3-1 4 2 4" /></I>Annotate</ViewerButton>
          <ViewerButton aria-label="Full screen"><I w={20} h={20} stroke="#eee" strokeWidth="1.500"><path d="M12 1.500h4a2.500 2.500 0 0 1 2.500 2.500v4M1.500 12v4A2.500 2.500 0 0 0 4 18.500h4" /></I></ViewerButton>
        </ViewerTools>
      </ViewerBar>

      <Stage>
        <MacBar>
          <MacMenus>
            <FaApple size={12} />
            <b>PowerPoint</b>
            {["File", "Edit", "View", "Insert", "Format", "Arrange", "Tools", "Slide Show", "Window", "Help"].map((m) => <button key={m}>{m}</button>)}
          </MacMenus>
          <MacStatus>
            <SharingBadge><I w={16} h={12} stroke="#eee"><path d="M8 10.500H2v-9h12V4" /><circle cx="12" cy="6" r="1.500" fill="#fff" stroke="none" /><path d="M9 11.500q3-5 6 0Z" fill="#fff" stroke="none" /></I></SharingBadge>
            {statusIcons.input}{statusIcons.c}{statusIcons.outlook}{statusIcons.share}{statusIcons.d}{statusIcons.bell}
            <VolumeX size={12} color="#bbb" /><BluetoothOff size={12} color="#888" />
            {statusIcons.s}
            <Battery>81%<I w={19} h={10} stroke="#aaa"><rect x=".5" y=".5" width="16" height="9" rx="2.500" /><rect x="2" y="2" width="11" height="6" rx="1" fill="#f3f3f3" stroke="none" /><path d="M18 3.500v3" /></I></Battery>
            <Wifi size={14} strokeWidth={3} />
            {statusIcons.toggles}
            <span>Mon Nov 4&nbsp; 13:53</span>
          </MacStatus>
        </MacBar>

        <Window>
          <TitleBar>
            <QuickAccess>
              <Light $color="#e6555c" aria-label="Close" /><Light $color="#efbb4e" aria-label="Minimise" /><Light $color="#62d151" $last aria-label="Zoom" />
              <label>AutoSave<Switch type="checkbox" /></label>
              <Home size={12} /><Save size={12} /><Undo2 size={13} /><Caret /><RotateCw size={13} color="#ccc" /><Ellipsis size={12} />
            </QuickAccess>
            <DocTitle>
              <I w={10} h={12} stroke="#ccc"><path d="M1 .500h6L9.500 3v8.500H1Z" fill="#fff" /><rect y="3" width="7" height="6" fill="#c9402c" stroke="none" /></I>
              CPU LT can’t boot up&nbsp;
              <Shield size={10} fill="#111" color="#111" />
              <span>Cisco Confidential — Saved to my Mac</span><Caret />
            </DocTitle>
            <TitleRight>
              <SearchBox><Search size={11} /><input aria-label="Search" placeholder="Search (Cmd + Ctrl + U)" /></SearchBox>
              <I w={14} h={14} stroke="#666"><circle cx="4" cy="5" r="1.700" /><path d="M1 9h7q0 4-3.500 4T1 9ZM8 1.500h5v4h-3L8.500 7Z" /></I>
            </TitleRight>
          </TitleBar>

          <TabRow>
            <Tabs>
              {["Home", "Insert", "Draw", "Design", "Transitions", "Animations", "Slide Show", "Record", "Review", "View"].map((t, i) => <Tab key={t} $active={i === 0}>{t}</Tab>)}
            </Tabs>
            <TabActions>
              <Pill><I w={13} h={13} stroke="#222"><circle cx="6.500" cy="6.500" r="5.500" /><circle cx="6.500" cy="6.500" r="3.500" fill="#000" /></I>Record</Pill>
              <Pill><MessageSquare size={13} />Comments</Pill>
              <Pill $primary><Share size={11} />Share<Caret c="#f3cfc8" /></Pill>
            </TabActions>
          </TabRow>

          <Ribbon>
            <Group $w={106} $pad={9} $gap={4}>
              <Big w={36} dim caret icon={pic.paste} label={["Paste"]} />
              <Stack>
                <RowButton><Scissors size={12} color="#3a77a8" />Cut</RowButton>
                <RowButton>{pic.copy}Copy <Caret /></RowButton>
                <RowButton><Paintbrush size={12} color="#c46a2c" />Format</RowButton>
              </Stack>
            </Group>
            <Group $w={118} $pad={8}>
              <Big w={40} caret icon={pic.newSlide} label={["New", "Slide"]} />
              <Stack>
                <RowButton>{pic.layout}Layout <Caret /></RowButton>
                <RowButton>{pic.reset}Reset</RowButton>
                <RowButton>{pic.section}Section <Caret /></RowButton>
              </Stack>
            </Group>
            <Group $w={267} $pad={7}>
              <Tools $w={256}>
                <ToolRow>
                  <Field $w={135}><select aria-label="Font"><option>Aptos (Body)</option></select><Caret /></Field>
                  <Field $w={42}><select aria-label="Font size"><option>20</option></select><Caret /></Field>
                  <Tool>A<sup>^</sup></Tool><Tool>A<sup>ˇ</sup></Tool><Rule /><Tool>A<I w={6} h={6} stroke="#c58fce"><path d="m1 4 2-3 2 1-2 3Z" /></I></Tool>
                </ToolRow>
                <ToolRow>
                  <Tool><b>B</b></Tool><Tool><i>I</i></Tool><Tool><u>U</u></Tool><Tool><s>ab</s></Tool><Tool>x²</Tool><Tool>x₂</Tool>
                  <DropTool>AV</DropTool><DropTool>Aa</DropTool><Rule />
                  <DropTool><I w={14} h={13} stroke="#aaa"><path d="m4 7 6-6 2 2-6 6Z" /><path d="M1 11.500h12" stroke="#f1f08e" strokeWidth="3" /></I></DropTool>
                  <DropTool><I w={14} h={13} stroke="#aaa"><path d="M4 9 7 1l3 8M5 6h4" /><path d="M1 11.500h12" stroke="#ee9a9a" strokeWidth="3" /></I></DropTool>
                </ToolRow>
              </Tools>
            </Group>
            <Group $w={255} $pad={6}>
              <Tools $w={188}>
                <ToolRow>
                  <DropTool><Lines lead rows={[[5, 13], [5, 13], [5, 13]]} /></DropTool>
                  <DropTool><Lines rows={[[4, 13], [4, 13], [4, 13]]}><path d="M1 0v3M0 6h2M0 10h2" stroke="#93bbdb" /></Lines></DropTool><Rule />
                  <Tool><Lines rows={[[1, 12], [7, 12], [1, 12]]}><path d="M0 6h5M2 4 0 6l2 2" stroke="#93bbdb" /></Lines></Tool>
                  <Tool><Lines rows={[[1, 12], [7, 12], [1, 12]]}><path d="M0 6h5M3 4l2 2-2 2" stroke="#93bbdb" /></Lines></Tool><Rule />
                  <DropTool><Lines rows={[[5, 13], [5, 13], [5, 13], [5, 13]]}><path d="M2 1v10M0 3l2-2 2 2M0 9l2 2 2-2" stroke="#93bbdb" /></Lines></DropTool><Rule />
                  <DropTool><I w={12} h={12} stroke="#93bbdb"><path d="M0 3.500h5M0 6h5M0 8.500h5M7 3.500h5M7 6h5M7 8.500h5" /></I></DropTool>
                </ToolRow>
                <ToolRow>
                  <Tool><Lines rows={[[1, 12], [1, 8], [1, 12], [1, 8]]} /></Tool>
                  <Tool><Lines rows={[[1, 12], [3, 10], [1, 12], [3, 10]]} /></Tool>
                  <Tool><Lines rows={[[1, 12], [5, 12], [1, 12], [5, 12]]} /></Tool>
                  <Tool><Lines rows={[[1, 12], [1, 12], [1, 12], [1, 12]]} /></Tool><Rule />
                  <DropTool><I w={12} h={12} stroke="#aaa"><path d="M1 0v11M4 0v11M2 9l2 2 2-2" /><path d="m7 8 2-7 2 7M8 5h2" stroke="#93bbdb" /></I></DropTool>
                  <DropTool><I w={13} h={12} stroke="#aaa"><path d="M4 2H1v8h3M9 2h3v8H9M3 6h7" /><path d="M6.500 0v4M6.500 8v4" stroke="#93bbdb" /></I></DropTool>
                </ToolRow>
              </Tools>
              <Big w={54} dim caret icon={pic.smart} label={["Convert to", "SmartArt"]} />
            </Group>
            <Group $w={121} $pad={4}>
              <Big w={40} caret icon={pic.picture} label={["Picture"]} />
              <Big w={40} caret icon={pic.shapes} label={["Shapes"]} />
              <Big w={28} icon={pic.textBox} label={["Text", "Box"]} />
            </Group>
            <Group $w={181} $pad={5}>
              <Big w={40} caret icon={pic.arrange} label={["Arrange"]} />
              <Big w={40} dim caret icon={pic.quick} label={["Quick", "Styles"]} />
              <Stack $spread $dim>
                <RowButton>{pic.fill}Shape Fill <Caret /></RowButton>
                <RowButton>{pic.outline}Shape Outline <Caret /></RowButton>
              </Stack>
            </Group>
            <Group $w={60} $center><Big w={50} caret icon={pic.sensitivity} label={["Sensitivity"]} /></Group>
            <Group $w={51} $center><Big w={44} icon={pic.addins} label={["Add-ins"]} /></Group>
            <Group $w={55} $center><Big w={44} icon={pic.designer} label={["Designer"]} /></Group>
            <Group $w={45} $center><Big w={40} icon={pic.webex} label={["Webex"]} /></Group>
            <Group $w={90} $pad={6} $last>
              <Big w={36} icon={pic.seismic} label={["Seismic"]} />
              <Big w={38} icon={<Settings size={26} strokeWidth={1} color="#444" />} label={["Settings"]} />
            </Group>
          </Ribbon>

          <Body>
            <Sidebar>
              {thumbs.map((t, i) => (
                <ThumbRow key={i}><span>{i + 1}</span><Thumb $active={i === 6}><svg width="121" height="69" viewBox="0 0 121 69">{t}</svg></Thumb></ThumbRow>
              ))}
            </Sidebar>
            <Main>
              <Canvas><Slide><SlideArt /></Slide></Canvas>
              <Notes>Click to add notes</Notes>
            </Main>
          </Body>

          <StatusBar>
            <StatusGroup $gap={17}>
              <span>Slide 7 of 7</span><span>English (China)</span>
              <Check><Accessibility size={11} />Accessibility: Investigate</Check>
            </StatusGroup>
            <StatusGroup $gap={14}>
              <I w={11} h={10} fill="#555" stroke="none"><path d="M0 0h4v4H0zM6 0h4v4H6zM0 6h4v4H0zM6 6h4v4H6z" /></I>
              <BookOpen size={12} /><Presentation size={12} />
              <Minus size={8} strokeWidth={4} />
              <ZoomSlider type="range" aria-label="Zoom" min="0" max="100" defaultValue="56" />
              <Plus size={8} strokeWidth={4} />
              <span>142%</span>
              <Maximize size={11} />
            </StatusGroup>
          </StatusBar>
        </Window>

        <Dock>
          {apps.map(([n, run, icon]) => <DockApp key={n} aria-label={n} $running={run}>{icon}</DockApp>)}
          <DockRule />
          {minis.map(([c, a, d], i) => <DockApp key={i} aria-label={`Window ${i + 1}`}><MiniDoc c={c} accent={a} dark={d} /></DockApp>)}
          <DockApp aria-label="Trash"><I w={26} h={33} stroke="#c9c9cc"><path d="M2 2h22l-3 29H5Z" fill="#e9e9ec" /><path d="M7 4l2 25M13 4v25M19 4l-2 25" stroke="#f6f6f8" /><ellipse cx="13" cy="2.500" rx="11" ry="2" fill="#f4f4f6" /></I></DockApp>
        </Dock>
      </Stage>
    </Viewer>
  );
}
